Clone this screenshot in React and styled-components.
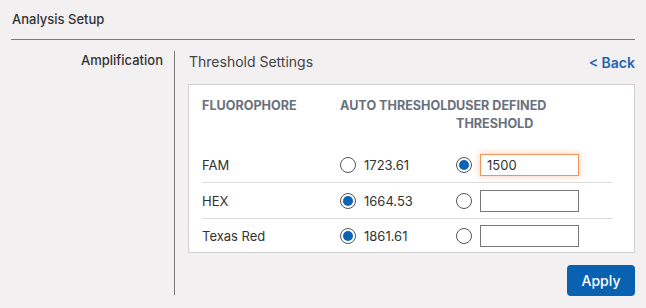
import React from "react";
import styled, { createGlobalStyle } from "styled-components";

const Global = createGlobalStyle`
  html, body { margin: 0; padding: 0; background: #f2f0f1; }
  body { font-family: "Inter", "Open Sans", sans-serif; color: #333; }
  * { box-sizing: border-box; }
`;

const Page = styled.div`
  width: 646px;
  height: 308px;
  padding: 0 11px;
  display: flex;
  flex-direction: column;
`;

const Header = styled.div`
  height: 40px;
  border-bottom: 1px solid #7b7b7b;
  display: flex;
  align-items: center;
  padding-left: 1px;
  padding-bottom: 1px;
  font-size: 13px;
  font-weight: 500;
  color: #333;
`;

const Body = styled.div`
  display: flex;
  margin-top: 11px;
`;

const Side = styled.div`
  width: 164px;
  border-right: 1px solid #7b7b7b;
  height: 244px;
  padding-right: 11px;
  text-align: right;
  font-size: 13px;
  font-weight: 500;
  line-height: 18px;
  color: #333;
`;

const Main = styled.div`
  flex: 1;
  padding-left: 13px;
  display: flex;
  flex-direction: column;
`;

const TitleRow = styled.div`
  display: flex;
  justify-content: space-between;
  align-items: center;
  height: 20px;
  padding-left: 1px;
`;

const Title = styled.span`
  font-size: 14px;
  color: #444;
`;

const Back = styled.a`
  font-size: 14px;
  font-weight: 600;
  color: #1c64b6;
  text-decoration: none;
  margin-top: 2px;
`;

const Panel = styled.div`
  margin-top: 13px;
  background: #fff;
  border: 1px solid #cfcfcf;
  padding: 12px 22px 0 13px;
  height: 169px;
`;

const Grid = styled.div`
  display: grid;
  grid-template-columns: 138px 116px 1fr;
`;

const HeadCell = styled.div`
  font-size: 12.6px;
  font-weight: 700;
  color: #6a717d;
  line-height: 18px;
  white-space: ${(p) => (p.$nowrap ? "nowrap" : "normal")};
  padding-right: ${(p) => (p.$pr || 0)}px;
`;

const Row = styled.div`
  display: grid;
  grid-template-columns: 138px 116px 1fr;
  align-items: center;
  height: ${(p) => (p.$last ? 34 : 36)}px;
  border-bottom: ${(p) => (p.$last ? "none" : "1px solid #dcdcdc")};
  font-size: 13px;
  color: #333;
`;

const Rows = styled.div`
  margin-top: 14px;
`;

const Choice = styled.label`
  display: flex;
  align-items: center;
  gap: 8px;
`;

const Radio = styled.span`
  width: 16px;
  height: 16px;
  border-radius: 50%;
  border: 1px solid #555;
  background: #fff;
  display: flex;
  align-items: center;
  justify-content: center;
  flex-shrink: 0;
  &::after {
    content: "";
    width: 10px;
    height: 10px;
    border-radius: 50%;
    background: ${(p) => (p.$on ? "#0b63b6" : "transparent")};
  }
`;

const Input = styled.input`
  width: 99px;
  height: 22px;
  border: 1px solid ${(p) => (p.$focus ? "#f0955a" : "#777")};
  box-shadow: ${(p) => (p.$focus ? "0 0 6px 1px rgba(245,150,90,0.4)" : "none")};
  border-radius: 0;
  outline: none;
  padding: 0 6px;
  font: inherit;
  font-size: 13px;
  color: #333;
`;

const Footer = styled.div`
  display: flex;
  justify-content: flex-end;
  margin-top: 12px;
`;

const Apply = styled.button`
  width: 68px;
  height: 31px;
  background: #0862b1;
  color: #fff;
  border: none;
  border-radius: 4px;
  font: inherit;
  font-size: 14px;
  font-weight: 500;
`;

const data = [
  { name: "FAM", auto: "1723.61", autoOn: false, value: "1500", focus: true },
  { name: "HEX", auto: "1664.53", autoOn: true, value: "" },
  { name: "Texas Red", auto: "1861.61", autoOn: true, value: "" },
];

export default function App() {
  return (
    <>
      <Global />
      <Page>
        <Header>Analysis Setup</Header>
        <Body>
          <Side>Amplification</Side>
          <Main>
            <TitleRow>
              <Title>Threshold Settings</Title>
              <Back href="#">&lt; Back</Back>
            </TitleRow>
            <Panel>
              <Grid>
                <HeadCell>FLUOROPHORE</HeadCell>
                <HeadCell $nowrap>AUTO THRESHOLD</HeadCell>
                <HeadCell $pr={40}>USER DEFINED THRESHOLD</HeadCell>
              </Grid>
              <Rows>
                {data.map((d, i) => (
                  <Row key={d.name} $last={i === data.length - 1}>
                    <span>{d.name}</span>
                    <Choice>
                      <Radio $on={d.autoOn} />
                      <span>{d.auto}</span>
                    </Choice>
                    <Choice>
                      <Radio $on={!d.autoOn} />
                      <Input defaultValue={d.value} $focus={d.focus} />
                    </Choice>
                  </Row>
                ))}
              </Rows>
            </Panel>
            <Footer>
              <Apply>Apply</Apply>
            </Footer>
          </Main>
        </Body>
      </Page>
    </>
  );
}
